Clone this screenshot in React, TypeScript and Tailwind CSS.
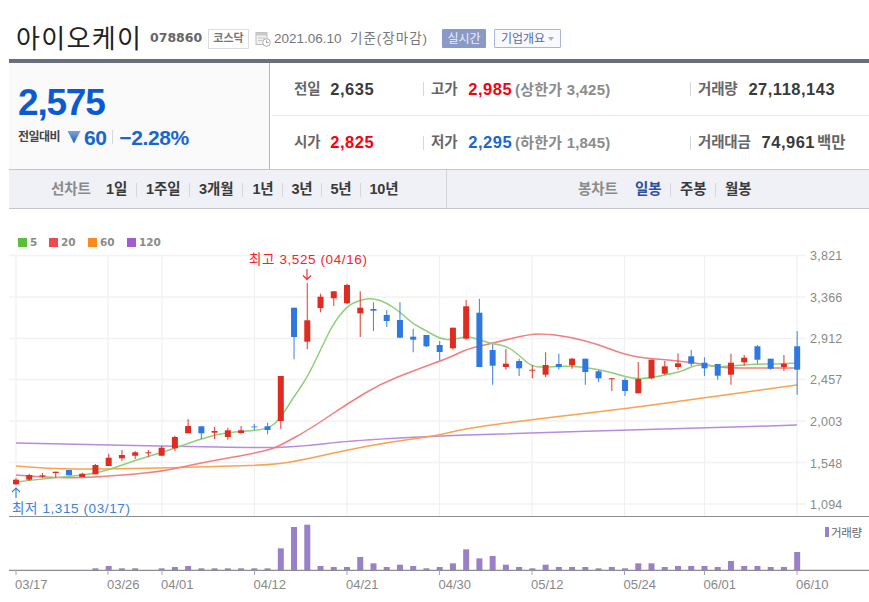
import React from "react";

const X = (i: number) => 16 + 13.24 * i;
// [up?, bodyTop, bodyBottom, wickTop, wickBottom]
const candles: [number, number, number, number, number][] = [
  [1,478.7,483.3,477,484],[1,474,478.7,472.7,480],[1,474.3,475.6,472,477],[1,470.7,472,470.7,476.7],[0,469,474.3,469,474.3],
  [1,472.7,476,471.7,476],[1,464,473.3,463,473.3],[1,456.7,465,452.7,465],[1,454,457.3,449,460],[1,451.3,454.7,450,458],
  [1,451.3,452.3,449,456],[1,446.7,454.7,445,455.3],[1,436,447.3,434.7,450],[1,425,432.3,418,432.3],[0,425.3,432.3,425.3,438],
  [1,430,431.7,426,438],[1,429.3,436,426.7,438.7],[1,429.3,432,425,432.7],[0,425.5,426.3,422.7,429],[0,425.3,429,421.7,433.3],
  [1,375,420,375,428],[0,306.7,336,306.7,358.3],[1,319.3,340.7,281.7,348.3],[1,295.7,307,292.7,311.3],[1,290.3,297.3,290.3,305],
  [1,284,302.3,282.7,303],[1,306.7,312.3,290.3,336],[0,308,309.7,301.3,330],[0,314,320,309.3,326],[0,319,336.7,301.3,337.3],
  [0,335.7,338.7,327.7,351.3],[0,334,345.3,334,346],[0,344,351,340,359.3],[1,326.7,347.3,326.7,348.7],[1,305.3,337.7,299,338.7],
  [0,311.7,366,297.7,366],[0,349,364.7,343.3,383.7],[1,362.7,366,348,368.7],[0,360,367.3,357.7,375],[1,368.7,369.7,364,377.3],
  [1,364,373.7,351.3,376],[0,363,366,352.7,368.7],[1,357.7,364.3,356.7,367.7],[0,357.7,371,357.7,383.7],[0,370.3,377.3,369,381],
  [1,377.3,378.3,377.3,390],[0,379,390,376.7,395],[1,378,392.3,361,392.3],[1,358.7,377.3,358.7,378.3],[1,365.3,372.7,360,374],
  [1,362.3,366,352.3,368.7],[0,355.3,362.7,349,365],[0,361.7,367.3,356.3,375],[0,363,374.7,363,378.7],[1,361.7,373.7,352.7,383.7],
  [1,356.7,361.3,354,364.7],[0,345.3,358.7,344,362.7],[0,357.7,367.7,357.7,368.7],[1,362.7,366,354,370],[0,345.3,368.7,330.3,393.7],
];
const vols = [447,447,447,447,447,447,442,435,442,442,447,442,438,435,442,442,442,442,442,442,382,318,311,435,438,438,408,427,438,431,435,442,438,427,385,412,405,431,438,442,431,438,438,438,442,438,442,427,427,438,435,435,435,438,420,435,435,438,438,393];

const green: number[][] = [[16,481],[50,477],[97,473],[133,460],[173,448],[200,438],[227,431],[267,429],[280,418],[293,397],[307,377],[320,350],[333,323],[347,305],[360,299],[373,297],[387,302],[400,311],[413,323],[427,330],[440,338],[453,339],[467,335],[480,339],[493,343],[507,345],[520,355],[532,366],[547,366],[570,365],[590,367],[610,371],[633,378],[650,377],[670,373],[683,370],[697,363],[717,366],[730,365],[757,363],[777,363],[797,362]];
const red: number[][] = [[16,474],[43,476],[77,477],[110,475],[160,471],[200,462],[267,450],[283,443],[310,428],[347,403],[380,383],[413,370],[440,360],[453,355],[467,348],[493,342],[530,333],[547,333],[570,336],[597,343],[623,353],[643,357],[670,359],[703,363],[723,367],[757,367],[797,367]];
const orange: number[][] = [[16,465],[50,468],[100,468],[160,467],[233,465],[267,464],[293,461],[347,449],[390,441],[435,435],[468,427],[530,419],[570,414],[623,408],[703,397],[797,384]];
const purple: number[][] = [[16,442],[100,444],[167,445],[267,447],[307,445],[347,440],[435,435],[532,432],[624,429],[704,427],[797,424]];

// rounds the corners of a polyline through segment midpoints
const curve = (p: number[][]) => {
  let d = `M${p[0][0]} ${p[0][1]}`;
  for (let i = 1; i < p.length - 1; i++) {
    const mx = (p[i][0] + p[i + 1][0]) / 2;
    const my = (p[i][1] + p[i + 1][1]) / 2;
    d += `Q${p[i][0]} ${p[i][1]} ${mx} ${my}`;
  }
  const l = p[p.length - 1];
  return d + `L${l[0]} ${l[1]}`;
};

const grid = [254.5, 296, 337.5, 378.5, 420, 461.5, 503];
const ticks = [
  [16, "03/17"], [108, "03/26"], [162, "04/01"], [254.5, "04/12"], [347, "04/21"],
  [439.5, "04/30"], [532, "05/12"], [624.5, "05/24"], [704.5, "06/01"], [797, "06/10"],
] as [number, string][];
const yLabels = [["3,821", 259], ["3,366", 301], ["2,912", 342], ["2,457", 383], ["2,003", 425], ["1,548", 467], ["1,094", 508]] as [string, number][];

function Chart() {
  return (
    <svg width="869" height="356" viewBox="0 246 869 356" fontFamily="'Liberation Sans','Noto Sans CJK KR',sans-serif">
      {grid.map((y) => <line key={y} x1="9" x2="806" y1={y} y2={y} stroke="#f2f2f3" strokeWidth="1.4" />)}
      {ticks.map(([x]) => <line key={x} x1={x} x2={x} y1="254" y2="515" stroke="#f0f0f2" strokeWidth="1.2" />)}
      <path d={curve(purple)} fill="none" stroke="#b98be0" strokeWidth="1.5" />
      <path d={curve(orange)} fill="none" stroke="#f9a24f" strokeWidth="1.5" />
      <path d={curve(red)} fill="none" stroke="#f27f7f" strokeWidth="1.5" />
      <path d={curve(green)} fill="none" stroke="#8fd07a" strokeWidth="1.5" />
      {candles.map((c, i) => {
        const col = c[0] ? "#e02b20" : "#2f78e2";
        return (
          <g key={i}>
            <line x1={X(i)} x2={X(i)} y1={c[3]} y2={c[4]} stroke={col} strokeWidth="1.1" opacity="0.85" />
            <rect x={X(i) - 3} y={c[1]} width="6" height={c[2] - c[1]} fill={col} />
          </g>
        );
      })}
      <line x1="9" x2="869" y1="515.5" y2="515.5" stroke="#8d8d90" strokeWidth="1.2" />
      {vols.map((v, i) => <rect key={i} x={X(i) - 3} y={420 + v / 3} width="6" height={569 - (420 + v / 3)} fill="#9a80c6" />)}
      <line x1="9" x2="869" y1="569.3" y2="569.3" stroke="#8d8d90" strokeWidth="1.2" />
      {ticks.map(([x, t]) => (
        <g key={x}>
          <line x1={x} x2={x} y1="569" y2="574" stroke="#a5a5a8" />
          <text x={x - 1} y="587.5" fontSize="13" fill="#888">{t}</text>
        </g>
      ))}
      {yLabels.map(([t, y]) => <text key={t} x="810" y={y} fontSize="12.5" letterSpacing="0.25" fill="#8a8a8a">{t}</text>)}
      <text x="249" y="263" fontSize="13.5" letterSpacing="0.6" fill="#f5222d">최고 3,525 (04/16)</text>
      <path d="M307 268V278M303 274.5L307 278.5L311 274.5" fill="none" stroke="#f5222d" strokeWidth="1.1" />
      <text x="12" y="511.5" fontSize="13.5" letterSpacing="0.6" fill="#3b82e0">최저 1,315 (03/17)</text>
      <path d="M16 497V487.5M12 491L16 487L20 491" fill="none" stroke="#3b82e0" strokeWidth="1.1" />
      <rect x="825" y="526" width="4" height="10" fill="#9a80c6" />
      <text x="831" y="536" fontSize="11.5" letterSpacing="-0.3" fill="#666">거래량</text>
    </svg>
  );
}

function Sep({ h = "h-[14px]" }: { h?: string }) {
  return <span className={`w-px bg-[#d6d7da] ${h}`} />;
}

function Legend({ color, label }: { color: string; label: string }) {
  return (
    <span className="flex items-center gap-[3px]">
      <span className={`w-[9px] h-[9px] ${color}`} />
      <span className="font-['DejaVu_Sans',sans-serif] text-[10.5px] leading-none font-bold text-[#8a8a8a]">{label}</span>
    </span>
  );
}

function Stat({ label, value, color, extra, gap, unit }: { label: string; value: string; color: string; extra?: string; gap: string; unit?: string }) {
  return (
    <div className="flex items-center h-full">
      <span className="text-[14.5px] leading-none font-bold text-[#666] tracking-[-0.2px]">{label}</span>
      <span className={`text-[16.5px] leading-none font-bold tracking-[0.5px] ${gap} ${color}`}>{value}</span>
      {extra && <span className="ml-[3px] text-[15px] leading-none font-bold text-[#8c8c8c] tracking-[0.2px]">{extra}</span>}
      {unit && <span className="ml-[2px] text-[15.5px] leading-none font-bold text-[#666]">{unit}</span>}
    </div>
  );
}

function ToolItem({ t, w, cls = "text-[#3a3a3a]" }: { t: string; w: string; cls?: string }) {
  return <span className={`${w} text-center whitespace-nowrap text-[14.5px] leading-none font-bold tracking-[-0.1px] ${cls}`}>{t}</span>;
}

export default function App() {
  return (
    <div className="w-[869px] h-[602px] overflow-hidden bg-white font-['Liberation_Sans','Noto_Sans_CJK_KR',sans-serif]">
      <div className="ml-[9px]">
        {/* Title */}
        <div className="h-[59px] flex items-center pl-[7px] pt-[18px]">
          <h1 className="text-[26px] leading-none font-normal text-[#222] tracking-[1.3px] w-[134px] shrink-0">아이오케이</h1>
          <span className="font-['DejaVu_Sans',sans-serif] text-[12.5px] leading-none font-bold text-[#666] w-[58px] shrink-0">078860</span>
          <span className="w-[41px] h-[20px] shrink-0 flex items-center justify-center border border-[#dcdcdc] text-[11px] leading-none font-bold text-[#777]">코스닥</span>
          <svg className="ml-[6px] shrink-0" width="16" height="16" viewBox="0 0 16 16" fill="none">
            <rect x="1" y="1.5" width="11" height="12" fill="#f1f1f1" stroke="#bbb" />
            <rect x="1" y="1.5" width="11" height="3" fill="#c9c9c9" />
            <path d="M3 7h7M3 9.5h4" stroke="#c4c4c4" />
            <circle cx="11.5" cy="11.5" r="3.8" fill="#fff" stroke="#aaa" />
            <path d="M11.5 9.5v2h2" stroke="#999" />
          </svg>
          <span className="ml-[3px] w-[76px] shrink-0 text-[13.5px] leading-none text-[#777]">2021.06.10</span>
          <span className="text-[13.5px] leading-none text-[#777] w-[92px] shrink-0 tracking-[1px]">기준(장마감)</span>
          <span className="w-[44px] h-[19px] shrink-0 flex items-center justify-center rounded-[1px] bg-[#8a99c6] text-[12px] leading-none text-[#eef0f8]">실시간</span>
          <span className="ml-[8px] w-[67px] h-[19px] shrink-0 flex items-center justify-center gap-[3px] rounded-[1px] border border-[#aab4d6] bg-[#f8f9fd] text-[12px] leading-none text-[#5a6aa2]">
            기업개요
            <span className="w-0 h-0 border-x-[3.5px] border-x-transparent border-t-[4px] border-t-[#a9b1cc]" />
          </span>
        </div>

        {/* Summary */}
        <div className="h-[110px] border-t-4 border-[#686f7a] flex">
          <div className="w-[261px] shrink-0 bg-[#fafafb] border-r border-[#b5b5b8] pl-[9px] pt-[22px]">
            <div className="text-[37px] leading-[36px] font-bold text-[#0b5ad2] tracking-[-1.2px]">2,575</div>
            <div className="mt-[5px] flex items-center h-[22px]">
              <span className="text-[12px] leading-none font-bold text-[#444] tracking-[-0.5px] w-[47px] whitespace-nowrap">전일대비</span>
              <svg className="ml-[2px]" width="14" height="14" viewBox="0 0 14 14">
                <defs>
                  <linearGradient id="tri" x1="0" y1="0" x2="0" y2="1">
                    <stop offset="0" stopColor="#7fa3da" />
                    <stop offset="1" stopColor="#1d5cc0" />
                  </linearGradient>
                </defs>
                <path d="M0.5 1H13.5L7 13.5Z" fill="url(#tri)" />
              </svg>
              <span className="ml-[3px] text-[21px] leading-none font-bold text-[#1767d0] tracking-[-0.5px]">60</span>
              <span className="ml-[6px] w-px h-[14px] bg-[#d6d7da]" />
              <span className="ml-[6px] text-[21px] leading-none font-bold text-[#1767d0] tracking-[-0.4px]">−2.28%</span>
            </div>
          </div>
          <div className="flex-1 grid grid-cols-[151px_267px_1fr] grid-rows-[53px_1fr] pl-[2px]">
            <div className="pl-[22px] border-b border-[#e8e8ea]"><Stat label="전일" value="2,635" color="text-[#3a3a3a]" gap="ml-[10px]" /></div>
            <div className="border-b border-[#e8e8ea] flex items-center">
              <Sep />
              <div className="pl-[7px] h-full"><Stat label="고가" value="2,985" color="text-[#f5000f]" gap="ml-[11px]" extra="(상한가 3,425)" /></div>
            </div>
            <div className="border-b border-[#e8e8ea] flex items-center">
              <Sep />
              <div className="pl-[7px] h-full"><Stat label="거래량" value="27,118,143" color="text-[#3a3a3a]" gap="ml-[11px]" /></div>
            </div>
            <div className="pl-[22px]"><Stat label="시가" value="2,825" color="text-[#f5000f]" gap="ml-[10px]" /></div>
            <div className="flex items-center">
              <Sep />
              <div className="pl-[7px] h-full"><Stat label="저가" value="2,295" color="text-[#1767d0]" gap="ml-[11px]" extra="(하한가 1,845)" /></div>
            </div>
            <div className="flex items-center">
              <Sep />
              <div className="pl-[7px] h-full"><Stat label="거래대금" value="74,961" color="text-[#3a3a3a]" gap="ml-[11px]" unit="백만" /></div>
            </div>
          </div>
        </div>

        {/* Toolbar */}
        <div className="h-[40px] flex items-center bg-[#eff1f6] border-y border-[#c3c6cc]">
          <div className="w-[438px] h-full flex items-center border-r border-[#d2d4d9] pl-[42px] pt-[1px]">
            <ToolItem t="선차트" w="w-[39px]" cls="text-[#8a8a8a]" />
            <span className="w-[16px]" />
            <ToolItem t="1일" w="w-[21px]" />
            <span className="w-[9px]" /><Sep /><span className="w-[9px]" />
            <ToolItem t="1주일" w="w-[34px]" />
            <span className="w-[9px]" /><Sep /><span className="w-[9px]" />
            <ToolItem t="3개월" w="w-[34px]" />
            <span className="w-[9px]" /><Sep /><span className="w-[9px]" />
            <ToolItem t="1년" w="w-[22px]" />
            <span className="w-[8px]" /><Sep /><span className="w-[8px]" />
            <ToolItem t="3년" w="w-[22px]" />
            <span className="w-[8px]" /><Sep /><span className="w-[8px]" />
            <ToolItem t="5년" w="w-[22px]" />
            <span className="w-[8px]" /><Sep /><span className="w-[8px]" />
            <ToolItem t="10년" w="w-[30px]" />
          </div>
          <div className="flex-1 h-full flex items-center pl-[131px] pt-[1px]">
            <ToolItem t="봉차트" w="w-[39px]" cls="text-[#8a8a8a]" />
            <span className="w-[18px]" />
            <ToolItem t="일봉" w="w-[26px]" cls="text-[#2c4fa3]" />
            <span className="w-[9px]" /><Sep /><span className="w-[9px]" />
            <ToolItem t="주봉" w="w-[26px]" />
            <span className="w-[9px]" /><Sep /><span className="w-[9px]" />
            <ToolItem t="월봉" w="w-[26px]" />
          </div>
        </div>

        {/* Legend */}
        <div className="h-[38px] pt-[28px] pl-[9px] flex items-start">
          <div className="w-[31px]"><Legend color="bg-[#5cbf3c]" label="5" /></div>
          <div className="w-[39px]"><Legend color="bg-[#f0484e]" label="20" /></div>
          <div className="w-[39px]"><Legend color="bg-[#fb8a1c]" label="60" /></div>
          <Legend color="bg-[#a35ccf]" label="120" />
        </div>
      </div>
      <Chart />
    </div>
  );
}
